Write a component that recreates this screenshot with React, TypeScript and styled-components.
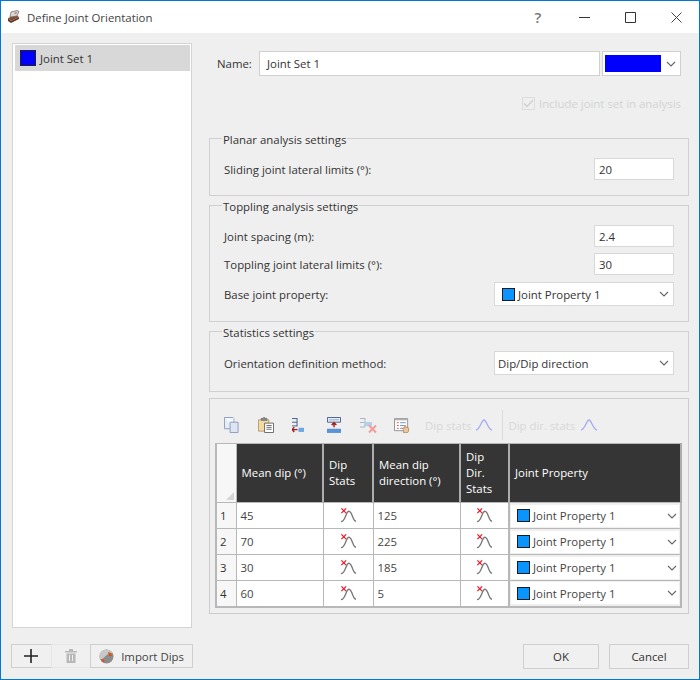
import React from "react";
import styled, { createGlobalStyle } from "styled-components";

const Global = createGlobalStyle`
  html, body { margin: 0; padding: 0; background: #f0f0f0; }
  * { box-sizing: border-box; }
  body { font-family: "Open Sans", "Noto Sans", "Liberation Sans", sans-serif; font-size: 11.4px; color: #333; }
`;

const Window = styled.div`
  width: 700px; height: 680px; border: 1px solid #0078d7; background: #efefef;
  display: flex; flex-direction: column; overflow: hidden;
`;
const TitleBar = styled.div`
  height: 32px; background: #fff; display: flex; align-items: center; padding-left: 6px; flex: none;
`;
const TitleText = styled.span`margin-left: 6px; padding-top: 1px; color: #444; flex: 1;`;
const WinBtn = styled.div`
  width: 46px; height: 32px; display: flex; align-items: center; justify-content: center; color: #555;
`;
const Help = styled(WinBtn)`font-size: 15px; color: #777; font-weight: 600;`;
const Body = styled.div`
  flex: 1; display: grid; grid-template-columns: 180px minmax(0, 1fr); column-gap: 17px;
  padding: 10px 10px 11px 11px; min-height: 0;
`;
const LeftCol = styled.div`display: flex; flex-direction: column; min-height: 0;`;
const List = styled.div`
  flex: 1; background: #fff; border: 1px solid #d4d4d4; padding: 1px 1px 0 2px; margin-bottom: 16px;
`;
const ListItem = styled.div`
  height: 26px; background: #d8d8d8; display: flex; align-items: center; padding-left: 5px; gap: 4px; color: #333;
`;
const ListSwatch = styled.span`width: 16px; height: 16px; background: #0000ff; border: 1px solid #222; flex: none;`;
const BottomLeft = styled.div`display: flex; height: 24px; margin-left: -1px;`;
const ToolBtn = styled.div<{ $w: number; $disabled?: boolean }>`
  width: ${p => p.$w}px; height: 24px; display: flex; align-items: center; justify-content: center; gap: 7px;
  border: 1px solid ${p => (p.$disabled ? "#e6e6e6" : "#cfcfcf")}; background: #f0f0f0; margin-right: -1px; color: #444;
`;
const RightCol = styled.div`display: flex; flex-direction: column; min-height: 0; min-width: 0;`;
const NameRow = styled.div`display: flex; align-items: center; height: 25px; margin: 8px 8px 0 8px;`;
const NameLabel = styled.label`width: 42px; flex: none; color: #333;`;
const NameInput = styled.div`
  width: 341px; height: 25px; background: #fff; border: 1px solid #d0d0d0; display: flex; align-items: center; padding-left: 7px; margin-right: 2px;
`;
const ColorCombo = styled.div`
  flex: 1; height: 25px; background: #fff; border: 1px solid #d0d0d0; display: flex; align-items: center; padding-left: 2px;
`;
const ColorBar = styled.span`width: 56px; height: 17px; background: #0000ff;`;
const ChevronWrap = styled.span<{ $mr?: number }>`margin-left: auto; display: flex; margin-right: ${p => p.$mr ?? 4}px;`;
const CheckRow = styled.div`
  display: flex; align-items: center; justify-content: flex-end; height: 15px; margin: 20px 8px 0 0; gap: 4px; color: #d3d3d3;
`;
const CheckBox = styled.span`
  width: 13px; height: 13px; border: 1px solid #dcdcdc; display: flex; align-items: center; justify-content: center;
`;
const Group = styled.fieldset<{ $h: number; $mt: number }>`
  height: ${p => p.$h}px; margin: ${p => p.$mt}px 0 0 0; padding: 0 14px; border: 1px solid #d0d0d0; min-width: 0;
  display: block;
`;
const Legend = styled.legend`padding: 4px 1px 0 1px; margin-left: -2px; line-height: 16px; color: #333;`;
const FieldRow = styled.div<{ $mt: number; $h?: number }>`
  display: flex; align-items: center; justify-content: space-between; height: ${p => p.$h ?? 22}px; margin-top: ${p => p.$mt}px;
`;
const NumInput = styled.div`
  width: 80px; height: 22px; background: #fff; border: 1px solid #d8d8d8; display: flex; align-items: center; padding-left: 4px;
`;
const Select = styled.div`
  width: 180px; height: 24px; background: #fff; border: 1px solid #d8d8d8; display: flex; align-items: center; padding-left: 3px;
`;
const PropSwatch = styled.span`width: 13px; height: 13px; background: #0a94ff; border: 1px solid #1a1a1a; margin: 0 3px 0 4px; flex: none;`;
const TablePanel = styled.div`
  margin-top: 6px; height: 216px; border: 1px solid #cdcdcd; padding: 11px 6px 0 5px; flex: none;
`;
const Toolbar = styled.div`display: flex; align-items: center; height: 30px; margin-bottom: 3px;`;
const TIcon = styled.span<{ $ml: number }>`display: flex; margin-left: ${p => p.$ml}px;`;
const DisabledLabel = styled.span<{ $ml: number }>`margin-left: ${p => p.$ml}px; color: #d8d8d8;`;
const Sep = styled.span`width: 1px; height: 30px; background: #dcdcdc; margin-left: 9px;`;
const Grid = styled.table`
  border-collapse: collapse; table-layout: fixed; width: 467px; border: 2px solid #b8b8b8; border-top-width: 1px; background: #fff;
`;
const CornerTh = styled.th`
  width: 20px; height: 59px; background: #f7f7f7; border: 1px solid #b8b8b8; padding: 0; position: relative;
`;
const Grip = styled.span`
  position: absolute; right: 2px; bottom: 2px; width: 0; height: 0;
  border-left: 8px solid transparent; border-bottom: 8px solid #d6d6d6;
`;
const HeadTh = styled.th<{ $w: number }>`
  width: ${p => p.$w}px; background: #353535; color: #fff; font-weight: 400; text-align: left; padding: 0 5px;
  line-height: 16px; border-right: 2px solid #adadad; border-bottom: 1px solid #b8b8b8;
`;
const RowHead = styled.td`
  background: #f7f7f7; border: 1px solid #b8b8b8; padding: 0 0 0 3px; height: 26px;
`;
const Cell = styled.td`border: 1px solid #b8b8b8; padding: 0 0 0 4px; height: 26px; color: #444;`;
const IconCell = styled.td`border: 1px solid #b8b8b8; padding: 0; height: 26px; text-align: center; line-height: 0;`;
const ComboCell = styled.td`border: 1px solid #b8b8b8; border-left-width: 2px; padding: 1px; height: 26px; background: #efefef;`;
const InnerCombo = styled.div`
  height: 22px; background: #fff; display: flex; align-items: center; padding-left: 2px; color: #444;
`;
const BottomRight = styled.div`display: flex; justify-content: flex-end; margin-top: auto; margin-bottom: -1px; height: 25px; gap: 10px;`;
const DlgBtn = styled.div<{ $w: number }>`
  width: ${p => p.$w}px; height: 25px; border: 1px solid #cfcfcf; background: #f0f0f0; display: flex; align-items: center; justify-content: center; color: #333;
`;

const Chevron = () => (
  <svg width="10" height="6" viewBox="0 0 10 6"><path d="M1 1l4 4 4-4" fill="none" stroke="#666" strokeWidth="1.1" /></svg>
);

const StatIcon = () => (
  <svg width="17" height="17" viewBox="0 0 18 17" style={{ verticalAlign: "middle" }}>
    <path d="M1 15c2.500 0 3.500-2 5-6 1.300-3.500 2-5 3.500-5s2.500 2 4 6c1 2.800 2 4.500 3.500 4.500" fill="none" stroke="#777" strokeWidth="1.4" />
    <path d="M1.500 1l5 5M6.500 1l-5 5" stroke="#f01428" strokeWidth="1.300" />
  </svg>
);

const Bell = () => (
  <svg width="18" height="12" viewBox="0 0 18 12"><path d="M1 11c2.500-.5 3.500-3 5-6 1.200-2.500 2-4 3-4s1.800 1.500 3 4c1.500 3 2.500 5.500 5 6" fill="none" stroke="#a8a8f4" strokeWidth="1.300" /></svg>
);

const CopyIcon = () => (
  <svg width="15" height="16" viewBox="0 0 16 17">
    <path d="M.5.500h9l1 1v11h-10z" fill="#e8edf5" stroke="#8b9cc0" />
    <path d="M1 1l9 10V1z" fill="#fff" opacity=".6" />
    <path d="M6.500 5.500h8.500v11H6.500z" fill="#dfe6f2" stroke="#8b9cc0" />
  </svg>
);
const PasteIcon = () => (
  <svg width="16" height="16" viewBox="0 0 17 17">
    <path d="M.5 3h11v12H.5z" fill="#f3d9a4" stroke="#b79a66" />
    <path d="M3.500 3.500V1.500h2l.5-1h1l.5 1h2v2z" fill="#888" stroke="#777" />
    <path d="M7 6.500h9.500v10H7z" fill="#fff" stroke="#666" />
    <path d="M9 9h5.500M9 11h5.500M9 13h5.500" stroke="#666" />
  </svg>
);
const InsertAfterIcon = () => (
  <svg width="12" height="16" viewBox="0 0 13 17">
    <path d="M0 1.500h5.500M0 5.500h5.500M0 9.500h5.500" stroke="#3d5a8a" />
    <path d="M5.500 1v9" stroke="#3d5a8a" />
    <path d="M7 11.500h6v4.500H7z" fill="#6ea8e0" />
    <path d="M0 13.500h6M2.500 11l-2.500 2.500 2.500 2.500" stroke="#a01818" strokeWidth="1.500" fill="none" />
  </svg>
);
const InsertIcon = () => (
  <svg width="14" height="16" viewBox="0 0 15 17">
    <path d="M.5.500h14v5H.5z" fill="#eef3fa" stroke="#3d5a8a" />
    <path d="M2 3h11" stroke="#8aa0c4" />
    <path d="M0 12.500h15V17H0z" fill="#5a92d8" />
    <path d="M7.500 11V6.500M5 8.500l2.500-2.500 2.500 2.500" stroke="#a01818" strokeWidth="1.500" fill="none" />
  </svg>
);
const DeleteIcon = () => (
  <svg width="17" height="16" viewBox="0 0 17 16">
    <path d="M0 1.500h5M0 5.500h5M0 10h5M5 1v9" stroke="#a9b6c8" />
    <path d="M4 5h8v4H4z" fill="#b8cde6" />
    <path d="M9 8.500l7 7M16 8.500l-7 7" stroke="#f39a9a" strokeWidth="2" />
  </svg>
);
const FormIcon = () => (
  <svg width="16" height="15" viewBox="0 0 17 16">
    <path d="M.5.500h14v13H.5z" fill="#fff" stroke="#909090" />
    <path d="M.5.500h14v2H.5z" fill="#b0b0b0" />
    <path d="M3 5h2M3 8h2M3 11h2" stroke="#d85050" />
    <path d="M6.500 5h6M6.500 8h4M6.500 11h3" stroke="#6a8cc8" />
    <path d="M10 15.500v-3l-1-1.500 1-.5 1 .5V8h1.500v2h2.500l.5 1v3l-1 1.500z" fill="#f0c49c" stroke="#a07850" strokeWidth=".7" />
  </svg>
);
const AppIcon = () => (
  <svg width="14" height="14" viewBox="0 0 14 14">
    <path d="M1 8l8-3 3 2-8 4z" fill="#8a4a30" />
    <path d="M1 8v3l3 2 8-4V7l-8 4z" fill="#5a3a2c" />
    <path d="M3 7l1-5 6-1.500 2 1L10 6z" fill="#d8d8d8" stroke="#666" strokeWidth=".7" />
    <path d="M7 3l3-1-1 2z" fill="#e0552a" />
  </svg>
);
const ImportIcon = () => (
  <svg width="15" height="15" viewBox="0 0 15 15">
    <circle cx="7.500" cy="7.500" r="7" fill="#8c8c8c" />
    <path d="M7.500.500a7 7 0 0 1 6 3.500c-3 0-5 1-7 3S3 11 1 10a7 7 0 0 1 6.500-9.500z" fill="#c8c8c8" />
    <path d="M9 3l3 1 1 3-3 0z" fill="#d9531e" />
    <path d="M2 10l3 .5L5.500 13.500 3 12.500z" fill="#d9531e" />
  </svg>
);

const rows = [
  ["1", "45", "125"],
  ["2", "70", "225"],
  ["3", "30", "185"],
  ["4", "60", "5"],
];

export default function App() {
  return (
    <>
      <Global />
      <Window>
        <TitleBar>
          <AppIcon />
          <TitleText>Define Joint Orientation</TitleText>
          <Help>?</Help>
          <WinBtn>
            <svg width="11" height="1" viewBox="0 0 11 1"><path d="M0 .5h11" stroke="#333" /></svg>
          </WinBtn>
          <WinBtn>
            <svg width="11" height="11" viewBox="0 0 11 11"><path d="M.5.500h10v10H.5z" fill="none" stroke="#333" /></svg>
          </WinBtn>
          <WinBtn>
            <svg width="11" height="11" viewBox="0 0 11 11"><path d="M.5.500l10 10M10.500.500l-10 10" stroke="#444" /></svg>
          </WinBtn>
        </TitleBar>
        <Body>
          <LeftCol>
            <List>
              <ListItem><ListSwatch />Joint Set 1</ListItem>
            </List>
            <BottomLeft>
              <ToolBtn $w={41}>
                <svg width="14" height="14" viewBox="0 0 14 14"><path d="M7 0v14M0 7h14" stroke="#222" strokeWidth="1.600" /></svg>
              </ToolBtn>
              <ToolBtn $w={41} $disabled>
                <svg width="12" height="14" viewBox="0 0 12 14"><path d="M0 2h12v1.500H0zM4 0h4v2H4zM1.500 4.500h9V14h-9z" fill="#b8b8b8" /><path d="M4.500 6v6M7.500 6v6" stroke="#efefef" /></svg>
              </ToolBtn>
              <ToolBtn $w={104}><ImportIcon />Import Dips</ToolBtn>
            </BottomLeft>
          </LeftCol>
          <RightCol>
            <NameRow>
              <NameLabel>Name:</NameLabel>
              <NameInput>Joint Set 1</NameInput>
              <ColorCombo><ColorBar /><ChevronWrap><Chevron /></ChevronWrap></ColorCombo>
            </NameRow>
            <CheckRow>
              <CheckBox>
                <svg width="11" height="9" viewBox="0 0 11 9"><path d="M1 4.500l3 3 6-6.500" fill="none" stroke="#cfcfcf" strokeWidth="1.300" /></svg>
              </CheckBox>
              <span>Include joint set in analysis</span>
            </CheckRow>
            <Group $h={68} $mt={17}>
              <Legend>Planar analysis settings</Legend>
              <FieldRow $mt={10}>
                <span>Sliding joint lateral limits (°):</span>
                <NumInput>20</NumInput>
              </FieldRow>
            </Group>
            <Group $h={127} $mt={-1}>
              <Legend>Toppling analysis settings</Legend>
              <FieldRow $mt={10}>
                <span>Joint spacing (m):</span>
                <NumInput>2.4</NumInput>
              </FieldRow>
              <FieldRow $mt={6}>
                <span>Toppling joint lateral limits (°):</span>
                <NumInput>30</NumInput>
              </FieldRow>
              <FieldRow $mt={7} $h={24}>
                <span>Base joint property:</span>
                <Select><PropSwatch />Joint Property 1<ChevronWrap><Chevron /></ChevronWrap></Select>
              </FieldRow>
            </Group>
            <Group $h={71} $mt={-1}>
              <Legend>Statistics settings</Legend>
              <FieldRow $mt={10} $h={24}>
                <span>Orientation definition method:</span>
                <Select>Dip/Dip direction<ChevronWrap><Chevron /></ChevronWrap></Select>
              </FieldRow>
            </Group>
            <TablePanel>
              <Toolbar>
                <TIcon $ml={9}><CopyIcon /></TIcon>
                <TIcon $ml={19}><PasteIcon /></TIcon>
                <TIcon $ml={18}><InsertAfterIcon /></TIcon>
                <TIcon $ml={23}><InsertIcon /></TIcon>
                <TIcon $ml={19}><DeleteIcon /></TIcon>
                <TIcon $ml={17}><FormIcon /></TIcon>
                <DisabledLabel $ml={15}>Dip stats</DisabledLabel>
                <TIcon $ml={4}><Bell /></TIcon>
                <Sep />
                <DisabledLabel $ml={5}>Dip dir. stats</DisabledLabel>
                <TIcon $ml={5}><Bell /></TIcon>
              </Toolbar>
              <Grid>
                <thead>
                  <tr>
                    <CornerTh><Grip /></CornerTh>
                    <HeadTh $w={87}>Mean dip (°)</HeadTh>
                    <HeadTh $w={50}>Dip<br />Stats</HeadTh>
                    <HeadTh $w={87}>Mean dip<br />direction (°)</HeadTh>
                    <HeadTh $w={49}>Dip<br />Dir.<br />Stats</HeadTh>
                    <HeadTh $w={172}>Joint Property</HeadTh>
                  </tr>
                </thead>
                <tbody>
                  {rows.map(r => (
                    <tr key={r[0]}>
                      <RowHead>{r[0]}</RowHead>
                      <Cell>{r[1]}</Cell>
                      <IconCell><StatIcon /></IconCell>
                      <Cell>{r[2]}</Cell>
                      <IconCell><StatIcon /></IconCell>
                      <ComboCell>
                        <InnerCombo><PropSwatch />Joint Property 1<ChevronWrap $mr={2}><Chevron /></ChevronWrap></InnerCombo>
                      </ComboCell>
                    </tr>
                  ))}
                </tbody>
              </Grid>
            </TablePanel>
            <BottomRight>
              <DlgBtn $w={76}>OK</DlgBtn>
              <DlgBtn $w={80}>Cancel</DlgBtn>
            </BottomRight>
          </RightCol>
        </Body>
      </Window>
    </>
  );
}
